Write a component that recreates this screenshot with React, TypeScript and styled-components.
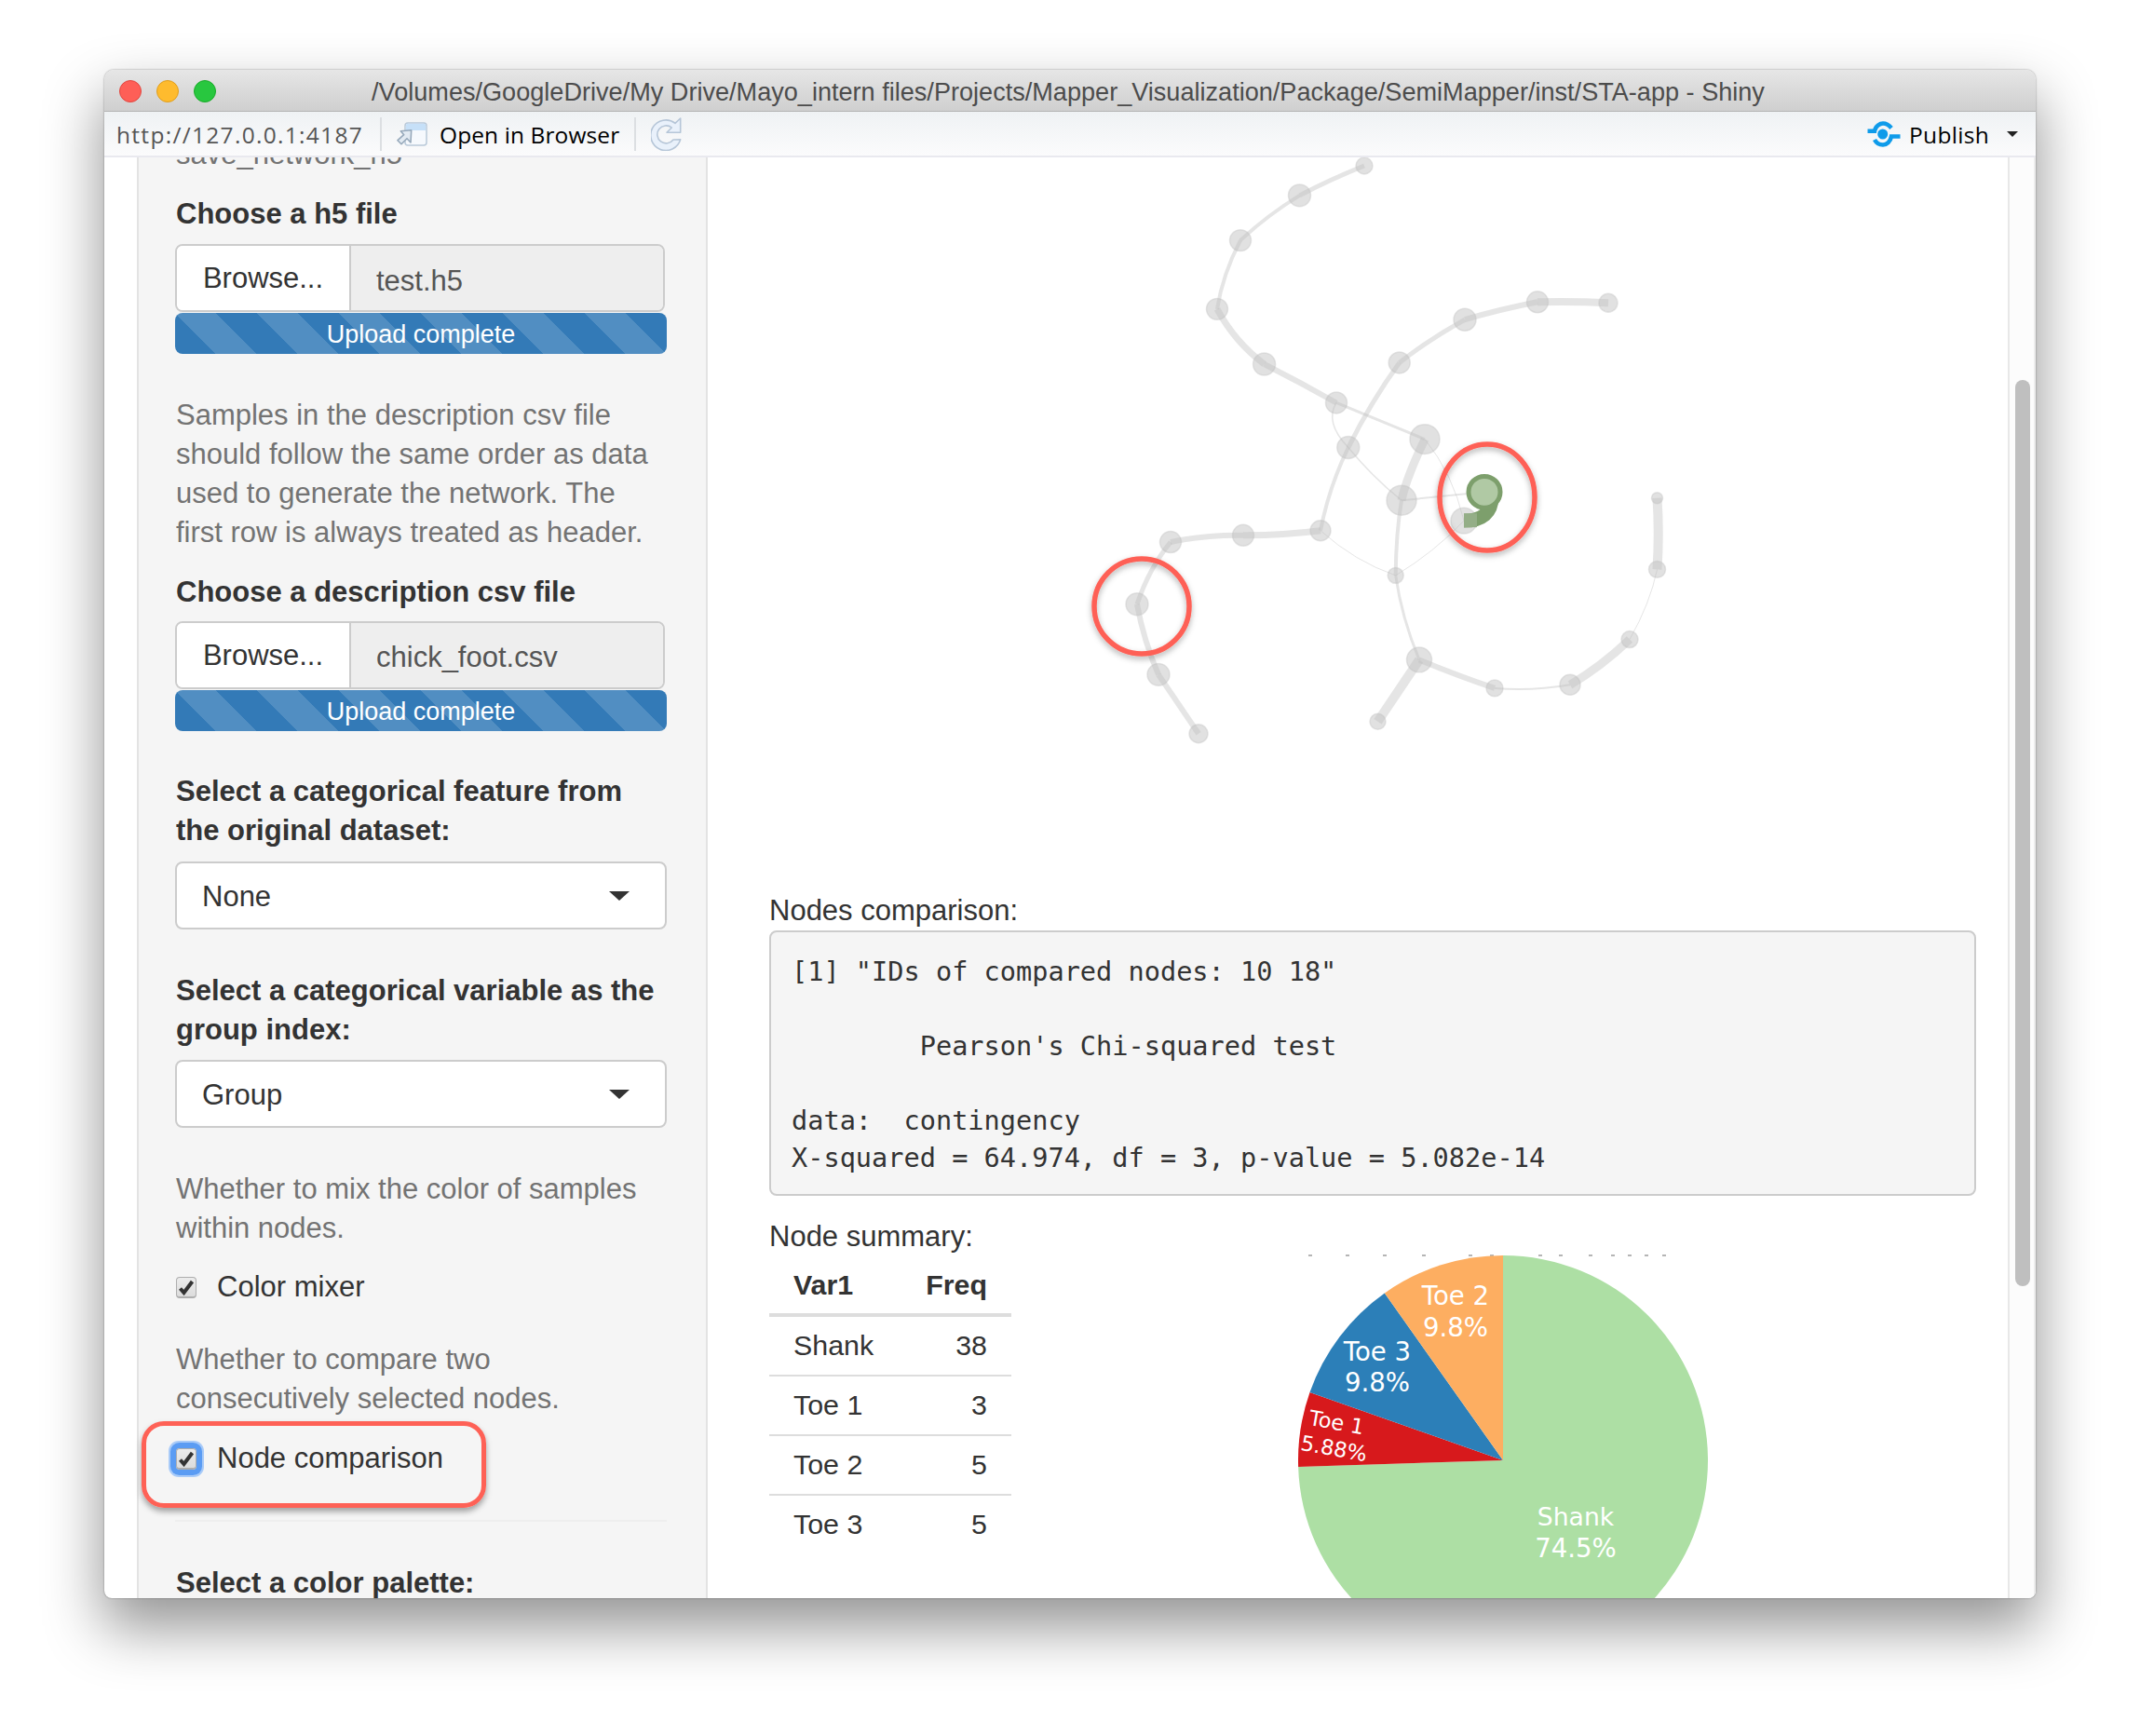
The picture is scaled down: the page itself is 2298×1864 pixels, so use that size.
import React from "react";
import styled, { createGlobalStyle } from "styled-components";

const Global = createGlobalStyle`
  html, body { margin: 0; padding: 0; background: #fff; }
  body { width: 2298px; height: 1864px; overflow: hidden; font-family: "Liberation Sans", Arial, sans-serif; }
`;
const Page = styled.div`
  width: 2298px; height: 1864px; box-sizing: border-box; padding: 75px 0 0 112px;
`;
const Win = styled.div`
  width: 2074px; height: 1641px; display: flex; flex-direction: column; overflow: hidden;
  background: #fff; border-radius: 10px 10px 8px 8px;
  box-shadow: 0 30px 62px 2px rgba(0,0,0,.42), 0 0 2px rgba(0,0,0,.45);
`;
const TitleBar = styled.div`
  flex: 0 0 45px; display: flex; align-items: center; position: relative; box-sizing: border-box;
  background: linear-gradient(#e6e6e6, #cfcfcf); border-bottom: 1px solid #b4b4b4; padding-left: 16px;
`;
const Lights = styled.div`display: flex; gap: 16px; margin-top: 2px;`;
const Light = styled.span<{ $c: string; $b: string }>`
  width: 24px; height: 24px; border-radius: 50%; background: ${p => p.$c}; box-sizing: border-box; border: 1px solid ${p => p.$b};
`;
const Title = styled.div`
  flex: 1; text-align: center; font: 27.1px/30px "Liberation Sans", sans-serif; color: #4c4c4c; margin: 3px 120px 0 -4px; white-space: nowrap;
`;
const ToolBar = styled.div`
  flex: 0 0 49px; box-sizing: border-box; display: flex; align-items: center; position: relative;
  background: linear-gradient(#eff2f4, #fbfbfc); border-bottom: 2px solid #e9e9ef;
  font: 24.5px/30px "Open Sans", sans-serif; color: #000; padding-left: 13px;
`;
const Url = styled.span`color: #555; width: 266px; white-space: nowrap; letter-spacing: 1.3px; padding-top: 2px;`;
const Sep = styled.span`width: 2px; height: 36px; background: #dcdfe2; margin: 0 16px 0 17px;`;
const OpenLabel = styled.span`margin: 0 0 0 12px; width: 192px; white-space: nowrap; letter-spacing: .1px; padding-top: 2px;`;
const Spacer = styled.div`flex: 1;`;
const PublishText = styled.span`margin: 0 19px 0 9px; letter-spacing: .3px; padding-top: 3px;`;
const Caret = styled.span<{ $w: number; $h: number; $c: string }>`
  width: 0; height: 0; border-left: ${p => p.$w / 2}px solid transparent; border-right: ${p => p.$w / 2}px solid transparent;
  border-top: ${p => p.$h}px solid ${p => p.$c}; display: block;
`;
const EndGap = styled.span`width: 19px;`;
const Content = styled.div`flex: 1; min-height: 0; display: flex; overflow: hidden;`;
const SideWrap = styled.div`flex: 0 0 648px; padding-left: 35px; box-sizing: border-box; overflow: hidden;`;
const Well = styled.div`
  width: 613px; height: 1700px; box-sizing: border-box; background: #f5f5f5; border: solid #e3e3e3; border-width: 0 2px;
  padding: 0 41px 0 39px; margin-top: -24px; color: #333; font-size: 31px; line-height: 42px;
`;
const Clipped = styled.div`color: #737373; padding-left: 1px;`;
const Label = styled.div<{ $t: number }>`font-weight: 700; margin-top: ${p => p.$t}px; padding-left: 1px; white-space: nowrap;`;
const FileRow = styled.div<{ $t: number }>`
  margin-top: ${p => p.$t}px; height: 73px; width: 526px; display: flex; box-sizing: border-box;
  border: 2px solid #ccc; border-radius: 8px; overflow: hidden;
`;
const Browse = styled.div`
  width: 185px; background: #fff; border-right: 2px solid #ccc; box-sizing: content-box;
  text-align: center; line-height: 69px;
`;
const FileName = styled.div<{ $lh: number }>`flex: 1; background: #eee; color: #555; padding-left: 27px; line-height: ${p => p.$lh}px;`;
const Progress = styled.div`
  height: 44px; width: 528px; margin-top: 1px; border-radius: 8px; color: #fff; font-size: 27px; line-height: 46px; text-align: center;
  background-color: #337ab7;
  background-image: linear-gradient(45deg, rgba(255,255,255,.15) 25%, transparent 25%, transparent 50%, rgba(255,255,255,.15) 50%, rgba(255,255,255,.15) 75%, transparent 75%, transparent);
  background-size: 88px 88px;
`;
const Help = styled.div<{ $t: number }>`color: #737373; margin-top: ${p => p.$t}px; line-height: 42px; padding-left: 1px; white-space: nowrap;`;
const Select = styled.div<{ $t: number }>`
  margin-top: ${p => p.$t}px; height: 73px; width: 528px; box-sizing: border-box; background: #fff; border: 2px solid #ccc; border-radius: 8px;
  display: flex; align-items: center; justify-content: space-between; padding: 0 38px 0 27px;
`;
const SelectText = styled.span`padding-top: 2px;`;
const CheckRow = styled.div<{ $t: number }>`
  position: relative; margin-top: ${p => p.$t}px; display: flex; align-items: center; height: 42px; padding-left: 1px;
`;
const Box = styled.span<{ $focus?: boolean }>`
  width: 22px; height: 23px; margin-right: 22px; box-sizing: border-box; border-radius: 4px; display: flex; align-items: center; justify-content: center;
  background: linear-gradient(#ececec, #dcdcdc); border: 1px solid #aeaeae; border-bottom-width: 2px;
  ${p => p.$focus ? "box-shadow: 0 0 0 6px #5b9cf3, 0 0 0 8px #a9cbf8;" : ""}
`;
const Callout = styled.div`
  position: absolute; left: -36px; top: -19px; width: 370px; height: 93px; box-sizing: border-box;
  border: 5px solid #fe6156; border-radius: 24px; box-shadow: 0 4px 6px rgba(0,0,0,.35);
`;
const Rule = styled.div`height: 2px; background: #eee; margin-top: 45px; width: 528px;`;
const Main = styled.div`flex: 1; min-width: 0; padding: 0 34px 0 66px; box-sizing: border-box; overflow: hidden; font-size: 31px; line-height: 42px; color: #333;`;
const NetSvg = styled.svg`display: block; width: 1296px; height: 788px;`;
const Pre = styled.pre`
  margin: 0; height: 285px; box-sizing: border-box; background: #f5f5f5; border: 2px solid #ccc; border-radius: 8px; padding: 23px 16px 0 22px;
  font: 28.6px/39.9px "DejaVu Sans Mono", monospace; color: #333; overflow: hidden; white-space: pre;
`;
const Lower = styled.div`display: flex; margin-top: 23px;`;
const TableCol = styled.div`flex: 0 0 260px;`;
const Table = styled.table`
  width: 260px; border-collapse: collapse; font-size: 30.4px; line-height: 42px;
  th { text-align: left; padding: 9px 26px 10px; border-bottom: 4px solid #ddd; font-weight: 700; }
  td { text-align: left; padding: 9px 26px 11px; }
  tbody tr + tr td { border-top: 2px solid #ddd; }
  th:last-child, td:last-child { text-align: right; }
`;
const PieSvg = styled.svg`display: block; width: 1036px; height: 409px; flex: 0 0 1036px;`;
const PieText = styled.text<{ $s?: number }>`
  font-family: "DejaVu Sans", Verdana, sans-serif; font-size: ${p => p.$s ?? 27.6}px; fill: #fff; text-anchor: middle;
`;
const Track = styled.div`
  flex: 0 0 30px; box-sizing: border-box; background: #fcfcfc; border-left: 2px solid #e8e8e8; border-right: 2px solid #ececec; padding: 239px 0 0 6px;
`;
const Thumb = styled.div`width: 16px; height: 973px; border-radius: 8px; background: #bfbfbf;`;

type N = [number, number, number];
const nodes: N[] = [
  [1465,178,9],[1395.5,210,12],[1332,258.5,11.5],[1307,332.6,11.5],[1357.6,392,12],[1435,433.7,11.5],[1530,473,16],
  [1727,326,10],[1651,325,11.5],[1573,344,12],[1502.7,390.5,11.5],[1447.8,482,12],[1418,571.6,11],[1335,576.7,11.5],
  [1257,584,11.5],[1221,651,12],[1244,727,12],[1287,790.7,10],[1505,539,16],[1572,561,14],[1498.7,620,8.5],
  [1524,711,13.5],[1479.5,777.6,8.5],[1605,741.6,9],[1686,738,11],[1750,689,9],[1779.5,613.5,9],[1779.5,536.5,6],
];
type E = [string, number];
const edges: E[] = [
  ["M1465 178 Q1430 192 1395.5 210", 5],["M1395.5 210 Q1360 232 1332 258.5", 4],["M1332 258.5 Q1313 295 1307 332.6", 4],
  ["M1307 332.6 Q1326 368 1357.6 392", 7],["M1357.6 392 Q1397 412 1435 433.7", 6],["M1435 433.7 L1530 473", 3],
  ["M1727 326 Q1690 324 1651 325", 8],["M1651 325 Q1610 333 1573 344", 6],["M1573 344 Q1535 365 1502.7 390.5", 5],
  ["M1502.7 390.5 Q1472 433 1447.8 482", 5],["M1447.8 482 Q1427 525 1418 571.6", 4],["M1418 571.6 Q1375 577 1335 576.7", 7],
  ["M1335 576.7 Q1295 576 1257 584", 6],["M1257 584 Q1234 612 1221 651", 5],["M1221 651 Q1228 690 1244 727", 6],
  ["M1244 727 L1287 790.7", 6],["M1530 473 Q1510 515 1505 539", 9],
  ["M1505 539 Q1499 575 1498.7 620", 4],["M1498.7 620 Q1505 665 1524 711", 3],["M1524 711 L1479.5 777.6", 10],
  ["M1524 711 Q1565 728 1605 741.6", 6],["M1605 741.6 Q1645 745 1686 738", 2],["M1686 738 Q1720 718 1750 689", 9],
  ["M1750 689 Q1772 650 1779.5 613.5", 1],["M1779.5 613.5 Q1782 575 1779.5 536.5", 10],["M1435 433.7 Q1422 455 1447.8 482", 1.5],
  ["M1447.8 482 Q1475 515 1505 539", 1.5],["M1505 539 L1594 530", 2],["M1530 473 Q1560 510 1572 561", 1],
  ["M1418 571.6 Q1455 605 1498.7 620", 1],["M1498.7 620 Q1540 595 1572 561", 1],
];

const slice = (a0: number, a1: number) => {
  const cx = 1614, cy = 1568, r = 220;
  const p = (a: number) => `${cx + r * Math.sin(a * Math.PI / 180)} ${cy - r * Math.cos(a * Math.PI / 180)}`;
  return `M${cx} ${cy} L${p(a0)} A${r} ${r} 0 ${a1 - a0 > 180 ? 1 : 0} 1 ${p(a1)} Z`;
};
const dots = [1405,1445,1485,1527,1577,1600,1652,1674,1706,1730,1748,1766,1785];
const rows: [string, number][] = [["Shank",38],["Toe 1",3],["Toe 2",5],["Toe 3",5]];

const Check = () => (
  <svg width="18" height="18" viewBox="0 0 18 18"><path d="M2.5 10.5 L6.5 15 L15.5 3" fill="none" stroke="#333" strokeWidth="4" /></svg>
);

export default function App() {
  return (
    <Page>
      <Global />
      <Win>
        <TitleBar>
          <Lights>
            <Light $c="#fe5f57" $b="#e2463f" />
            <Light $c="#febb2e" $b="#e09e1c" />
            <Light $c="#28c73f" $b="#1aab29" />
          </Lights>
          <Title>/Volumes/GoogleDrive/My Drive/Mayo_intern files/Projects/Mapper_Visualization/Package/SemiMapper/inst/STA-app - Shiny</Title>
        </TitleBar>
        <ToolBar>
          <Url>http://127.0.0.1:4187</Url>
          <Sep />
          <svg width="34" height="26" viewBox="0 0 34 26">
            <rect x="9" y="1" width="23" height="24" rx="3" fill="#f6f9fd" stroke="#b9c9d9" strokeWidth="1.5" />
            <path d="M9.8 9 V4 Q9.8 1.8 12 1.8 H29 Q31.2 1.8 31.2 4 V9 Z" fill="#c6e0f8" />
            <path d="M15.7 8.7 L4.3 9.7 L7.7 13.7 L1 19.7 L5 23.7 L11 17.7 L15 22 Z" fill="#e2eaf2" stroke="#97a9bb" strokeWidth="1.6" strokeLinejoin="round" />
          </svg>
          <OpenLabel>Open in Browser</OpenLabel>
          <Sep />
          <svg width="34" height="36" viewBox="0 0 34 36">
            <path d="M31.7 1 V16.3 H17 L22.3 11 A9.5 9.5 0 1 0 24 24 L31.7 23.7 A16.3 16.3 0 1 1 26 6.3 Z" fill="#e9f1fb" stroke="#b6c6d8" strokeWidth="1.6" strokeLinejoin="round" />
          </svg>
          <Spacer />
          <svg width="36" height="28" viewBox="0 0 36 28">
            <path d="M0.5 10.7 H8 C9 5 14 2.5 17 2.5 C20 2.5 24 5 26 7.5" fill="none" stroke="#0f9bea" strokeWidth="4.5" />
            <path d="M35.5 16.5 H26 C25 22 21 25.5 17 25.5 C14 25.5 10 24 8 20" fill="none" stroke="#0f9bea" strokeWidth="4.5" />
            <circle cx="16.7" cy="14" r="5.5" fill="#0f9bea" />
          </svg>
          <PublishText>Publish</PublishText>
          <Caret $w={12} $h={6} $c="#222" />
          <EndGap />
        </ToolBar>
        <Content>
          <SideWrap>
            <Well>
              <Clipped>save_network_h5</Clipped>
              <Label $t={22}>Choose a h5 file</Label>
              <FileRow $t={11}><Browse>Browse...</Browse><FileName $lh={75}>test.h5</FileName></FileRow>
              <Progress>Upload complete</Progress>
              <Help $t={45}>Samples in the description csv file<br />should follow the same order as data<br />used to generate the network. The<br />first row is always treated as header.</Help>
              <Label $t={22}>Choose a description csv file</Label>
              <FileRow $t={10}><Browse>Browse...</Browse><FileName $lh={73}>chick_foot.csv</FileName></FileRow>
              <Progress>Upload complete</Progress>
              <Label $t={44}>Select a categorical feature from<br />the original dataset:</Label>
              <Select $t={12}><SelectText>None</SelectText><Caret $w={22} $h={10} $c="#333" /></Select>
              <Label $t={45}>Select a categorical variable as the<br />group index:</Label>
              <Select $t={11}><SelectText>Group</SelectText><Caret $w={22} $h={10} $c="#333" /></Select>
              <Help $t={45}>Whether to mix the color of samples<br />within nodes.</Help>
              <CheckRow $t={21}><Box><Check /></Box>Color mixer</CheckRow>
              <Help $t={36}>Whether to compare two<br />consecutively selected nodes.</Help>
              <CheckRow $t={22}><Box $focus><Check /></Box>Node comparison<Callout /></CheckRow>
              <Rule />
              <Label $t={45}>Select a color palette:</Label>
            </Well>
          </SideWrap>
          <Main>
            <NetSvg viewBox="826 169 1296 788">
              <defs>
                <filter id="sh" x="-20%" y="-20%" width="140%" height="140%"><feDropShadow dx="0" dy="3" stdDeviation="3" floodColor="#000" floodOpacity=".3" /></filter>
              </defs>
              <g transform="translate(0 .85) scale(1 .9952)">
                {nodes.map(([x, y, r], i) => <circle key={i} cx={x} cy={y} r={r} fill="#b8b8b8" fillOpacity=".42" stroke="#c8c8c8" strokeOpacity=".45" strokeWidth="1.5" />)}
                {edges.map(([d, w], i) => <path key={i} d={d} fill="none" stroke="#bdbdbd" strokeOpacity=".4" strokeWidth={w} />)}
                <path d="M1572 561 C1592 561 1602 552 1602 535" fill="none" stroke="#7d9f6c" strokeWidth="15" />
                <rect x="1572" y="553" width="14" height="15" fill="#94ae87" />
                <circle cx="1594" cy="530" r="17" fill="#b0c9a4" stroke="#7d9f6c" strokeWidth="5" />
              </g>
              <ellipse cx="1597" cy="534" rx="51" ry="57" fill="none" stroke="#fe6156" strokeWidth="5.5" filter="url(#sh)" />
              <circle cx="1226" cy="651" r="51" fill="none" stroke="#fe6156" strokeWidth="5.5" filter="url(#sh)" />
            </NetSvg>
            <div>Nodes comparison:</div>
            <Pre>{`[1] "IDs of compared nodes: 10 18"

        Pearson's Chi-squared test

data:  contingency
X-squared = 64.974, df = 3, p-value = 5.082e-14`}</Pre>
            <Lower>
              <TableCol>
                <div>Node summary:</div>
                <Table>
                  <thead><tr><th>Var1</th><th>Freq</th></tr></thead>
                  <tbody>{rows.map(([a, b]) => <tr key={a}><td>{a}</td><td>{b}</td></tr>)}</tbody>
                </Table>
              </TableCol>
              <PieSvg viewBox="1086 1307 1036 409">
                {dots.map(x => <rect key={x} x={x} y="1347" width="4" height="2" fill="#b5b5b5" />)}
                <path d={slice(0, 268.2)} fill="#addfa4" />
                <path d={slice(268.2, 289.4)} fill="#d7191c" />
                <path d={slice(289.4, 324.7)} fill="#2c7fb8" />
                <path d={slice(324.7, 360)} fill="#fdae61" />
                <PieText x="1563" y="1401">Toe 2</PieText>
                <PieText x="1563" y="1435">9.8%</PieText>
                <PieText x="1479" y="1461">Toe 3</PieText>
                <PieText x="1479" y="1494">9.8%</PieText>
                <PieText $s={22.6} transform="translate(1434 1535) rotate(10)">Toe 1</PieText>
                <PieText $s={22.6} transform="translate(1431 1563) rotate(10)">5.88%</PieText>
                <PieText $s={26.6} x="1692" y="1638">Shank</PieText>
                <PieText x="1692" y="1672">74.5%</PieText>
              </PieSvg>
            </Lower>
          </Main>
          <Track><Thumb /></Track>
        </Content>
      </Win>
    </Page>
  );
}
